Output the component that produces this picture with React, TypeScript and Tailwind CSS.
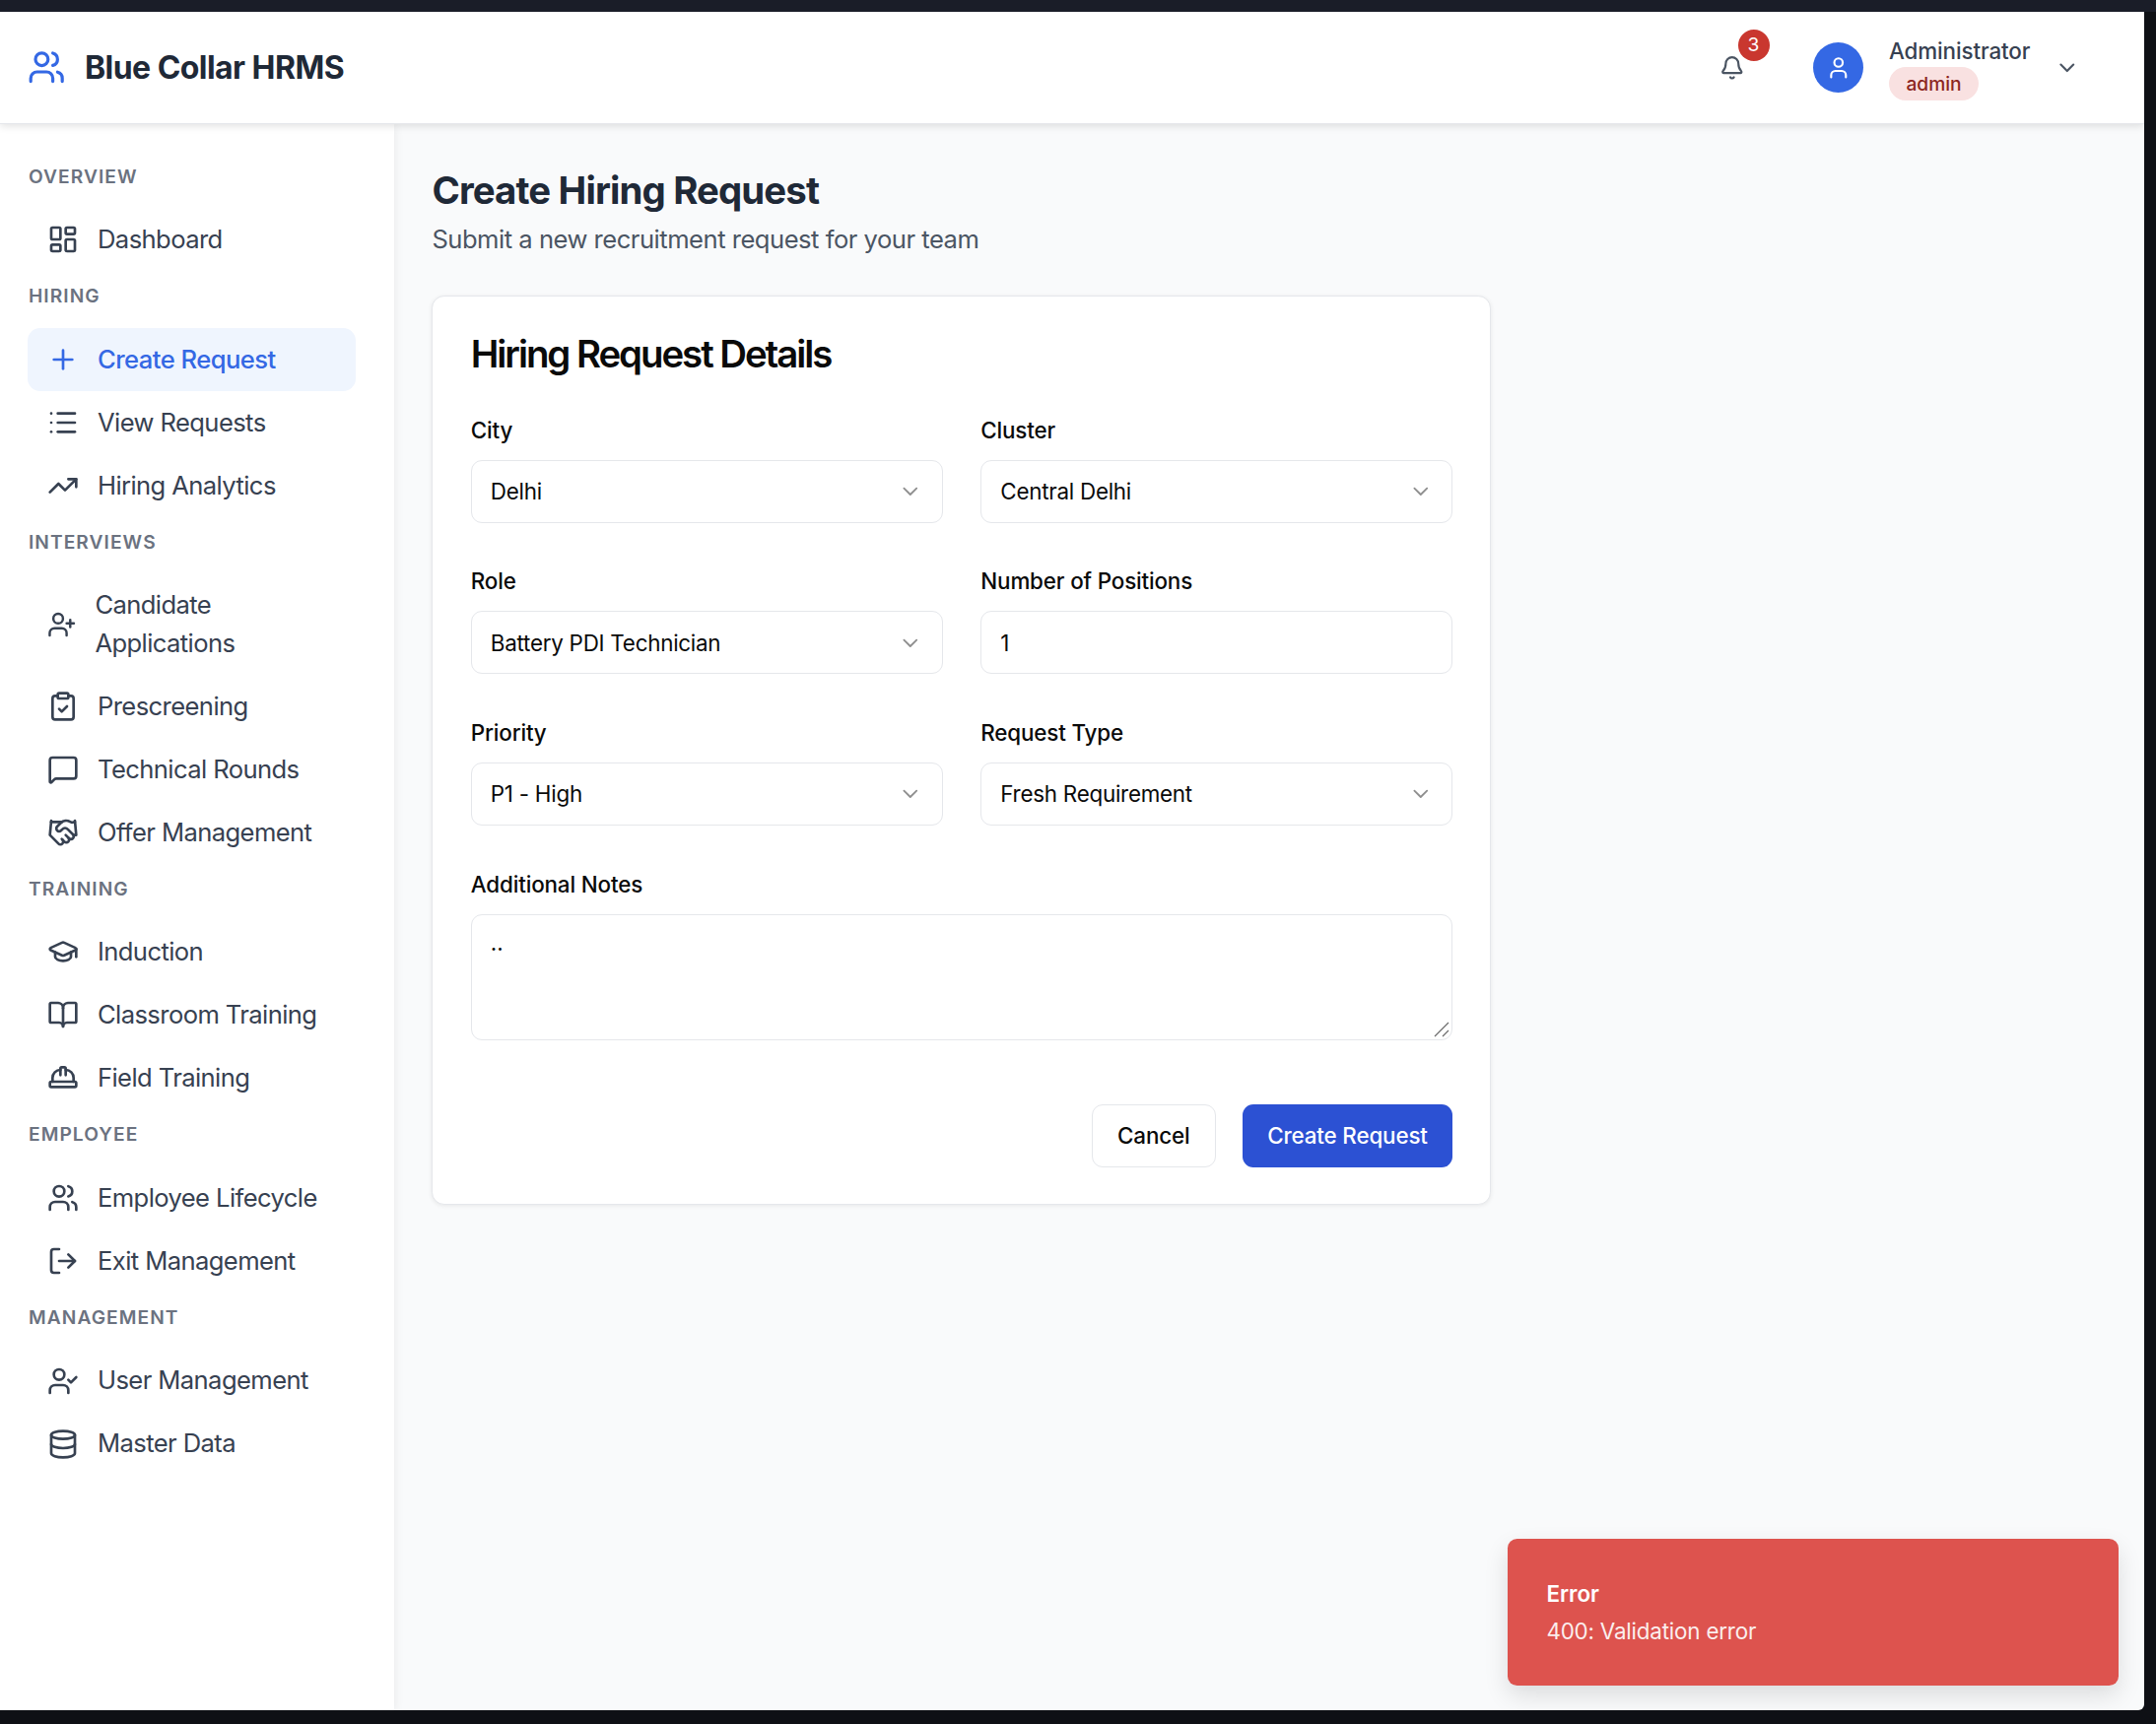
import {
  Bell,
  BookOpen,
  ChevronDown,
  ClipboardCheck,
  Database,
  GraduationCap,
  Handshake,
  HardHat,
  LayoutDashboard,
  List,
  LogOut,
  MessageSquare,
  Plus,
  TrendingUp,
  User,
  UserCheck,
  UserPlus,
  Users,
} from "lucide-react";

const sections = [
  { title: "OVERVIEW", items: [{ label: "Dashboard", icon: LayoutDashboard }] },
  {
    title: "HIRING",
    items: [
      { label: "Create Request", icon: Plus, active: true },
      { label: "View Requests", icon: List },
      { label: "Hiring Analytics", icon: TrendingUp },
    ],
  },
  {
    title: "INTERVIEWS",
    items: [
      { label: "Candidate Applications", icon: UserPlus },
      { label: "Prescreening", icon: ClipboardCheck },
      { label: "Technical Rounds", icon: MessageSquare },
      { label: "Offer Management", icon: Handshake },
    ],
  },
  {
    title: "TRAINING",
    items: [
      { label: "Induction", icon: GraduationCap },
      { label: "Classroom Training", icon: BookOpen },
      { label: "Field Training", icon: HardHat },
    ],
  },
  {
    title: "EMPLOYEE",
    items: [
      { label: "Employee Lifecycle", icon: Users },
      { label: "Exit Management", icon: LogOut },
    ],
  },
  {
    title: "MANAGEMENT",
    items: [
      { label: "User Management", icon: UserCheck },
      { label: "Master Data", icon: Database },
    ],
  },
];

function Field({ label, children }: { label: string; children: React.ReactNode }) {
  return (
    <div>
      <label className="block h-[32px] mb-[14px] text-[22.4px] leading-[32px] font-medium text-[#0a0a0a] tracking-[-0.15px]">{label}</label>
      {children}
    </div>
  );
}

function SelectBox({ value }: { value: string }) {
  return (
    <div className="flex items-center justify-between h-[64px] px-[19px] rounded-[11px] border-[1.6px] border-[#e5e7eb] bg-white text-[22.4px] text-[#0a0a0a] tracking-[-0.25px]">
      <span>{value}</span>
      <ChevronDown className="w-[25.6px] h-[25.6px] text-[#737373] opacity-80" strokeWidth={1.7} />
    </div>
  );
}

export default function App() {
  return (
    <div className="w-[2188px] h-[1750px] flex flex-col bg-[#0e1015] font-['Inter',sans-serif] overflow-hidden">
      <div className="h-[12px] shrink-0 bg-[#1a1d28]" />

      <div className="relative flex-1 min-h-0 mr-[12px] mb-[14px] flex flex-col bg-[#f9fafb] rounded-br-[6px] overflow-hidden">
        {/* Header */}
        <header className="relative z-20 h-[114px] shrink-0 flex items-center pl-[28px] pr-[65px] bg-white border-b-[1.6px] border-[#e5e7eb] shadow-[0_2px_8px_rgba(0,0,0,0.12)]">
          <Users className="w-[38.4px] h-[38.4px] text-[#3468e4]" />
          <span className="ml-[19.6px] text-[32px] font-bold text-[#1f2937] tracking-[-0.55px]">Blue Collar HRMS</span>

          <div className="ml-auto flex items-center">
            <div className="relative mr-[70px]">
              <Bell className="w-[25.6px] h-[25.6px] text-[#4b5563]" />
              <span className="absolute -top-[26px] left-[19px] w-[32px] h-[32px] rounded-full bg-[#c9372f] flex items-center justify-center text-[19.2px] text-white">
                3
              </span>
            </div>
            <div className="w-[51.2px] h-[51.2px] rounded-full bg-[#3468e4] flex items-center justify-center">
              <User className="w-[25.6px] h-[25.6px] text-white" />
            </div>
            <div className="ml-[25.6px] w-[144px] flex flex-col items-start">
              <span className="text-[22.4px] leading-[32px] font-medium text-[#374151] tracking-[-0.1px]">Administrator</span>
              <span className="px-[17.5px] h-[34px] rounded-full bg-[#f9e1e1] text-[#8d2620] text-[19.2px] leading-[34px] font-medium">
                admin
              </span>
            </div>
            <ChevronDown className="ml-[24.5px] w-[25.6px] h-[25.6px] text-[#4b5563]" />
          </div>
        </header>

        <div className="flex flex-1 min-h-0">
          {/* Sidebar */}
          <aside className="relative z-10 w-[400px] shrink-0 bg-white pt-[40.5px] pl-[28px] pr-[39px] shadow-[0_2px_10px_rgba(0,0,0,0.08)]">
            {sections.map((section) => (
              <div key={section.title} className="mb-[12.8px]">
                <div className="h-[25.6px] mb-[19.2px] pl-[1px] text-[19.2px] leading-[25.6px] font-semibold text-[#6b7280] tracking-[1.05px]">
                  {section.title}
                </div>
                {section.items.map((item) => {
                  const Icon = item.icon;
                  return (
                    <div
                      key={item.label}
                      className={
                        item.active
                          ? "flex items-center gap-[19px] px-[20px] py-[12.8px] rounded-[12.8px] bg-[#eff5fe] text-[#3468e4] text-[25.6px] leading-[38.4px] font-medium tracking-[-0.55px]"
                          : "flex items-center gap-[19px] px-[20px] py-[12.8px] rounded-[12.8px] text-[#374151] text-[25.6px] leading-[38.4px] tracking-[-0.6px]"
                      }
                    >
                      <Icon className="w-[32px] h-[32px]" />
                      <span>{item.label}</span>
                    </div>
                  );
                })}
              </div>
            ))}
          </aside>

          {/* Main */}
          <main className="flex-1 min-w-0 pt-[42px] pl-[38.4px]">
            <h1 className="text-[38.4px] leading-[51.2px] font-bold text-[#1f2937] tracking-[-0.87px]">Create Hiring Request</h1>
            <p className="mt-[5px] text-[25.6px] leading-[38.4px] text-[#4b5563] tracking-[-0.5px]">Submit a new recruitment request for your team</p>

            <section className="mt-[37.4px] w-[1074.4px] rounded-[12.8px] border-[1.6px] border-[#e5e7eb] bg-white pl-[38.4px] pr-[37.4px] pt-[39.4px] pb-[37px] shadow-[0_1px_4px_rgba(0,0,0,0.08)]">
              <h2 className="text-[38.4px] leading-[38.4px] font-semibold text-[#0a0a0a] tracking-[-2.05px]">Hiring Request Details</h2>

              <div className="mt-[42px] grid grid-cols-2 gap-x-[38.4px] gap-y-[43.6px]">
                <Field label="City">
                  <SelectBox value="Delhi" />
                </Field>
                <Field label="Cluster">
                  <SelectBox value="Central Delhi" />
                </Field>
                <Field label="Role">
                  <SelectBox value="Battery PDI Technician" />
                </Field>
                <Field label="Number of Positions">
                  <div className="flex items-center h-[64px] px-[19px] rounded-[11px] border-[1.6px] border-[#e5e7eb] bg-white text-[22.4px] text-[#0a0a0a]">
                    1
                  </div>
                </Field>
                <Field label="Priority">
                  <SelectBox value="P1 - High" />
                </Field>
                <Field label="Request Type">
                  <SelectBox value="Fresh Requirement" />
                </Field>
              </div>

              <div className="mt-[43.6px]">
                <Field label="Additional Notes">
                  <div className="relative h-[128px] px-[19px] py-[12.8px] rounded-[11px] border-[1.6px] border-[#e5e7eb] bg-white text-[22.4px] leading-[32px] text-[#0a0a0a]">
                    ..
                    <svg className="absolute right-[2px] bottom-[2px] w-[16px] h-[16px] text-[#6b6b6b]" viewBox="0 0 16 16" fill="none" stroke="currentColor" strokeWidth="1.2">
                      <path d="M1 15 15 1M9 15l6-6" />
                    </svg>
                  </div>
                </Field>
              </div>

              <div className="mt-[65px] flex justify-end gap-[26.5px]">
                <button className="h-[64px] px-[25.5px] rounded-[11px] border-[1.6px] border-[#e5e7eb] bg-white text-[22.4px] font-medium text-[#0a0a0a] tracking-[-0.15px]">
                  Cancel
                </button>
                <button className="h-[64px] px-[25.6px] rounded-[11px] bg-[#2c51d3] text-[22.4px] font-medium text-white tracking-[-0.15px]">
                  Create Request
                </button>
              </div>
            </section>
          </main>
        </div>

        {/* Toast */}
        <div className="absolute z-30 right-[25.6px] bottom-[25px] w-[620px] rounded-[9.6px] bg-[#dd534e] pl-[39px] pr-[40px] pt-[40px] pb-[39px] text-white shadow-[0_10px_24px_rgba(0,0,0,0.12)]">
          <div className="text-[22.4px] leading-[32px] font-semibold">Error</div>
          <div className="mt-[6.4px] text-[22.4px] leading-[32px] opacity-90 tracking-[-0.2px]">400: Validation error</div>
        </div>
      </div>
    </div>
  );
}
